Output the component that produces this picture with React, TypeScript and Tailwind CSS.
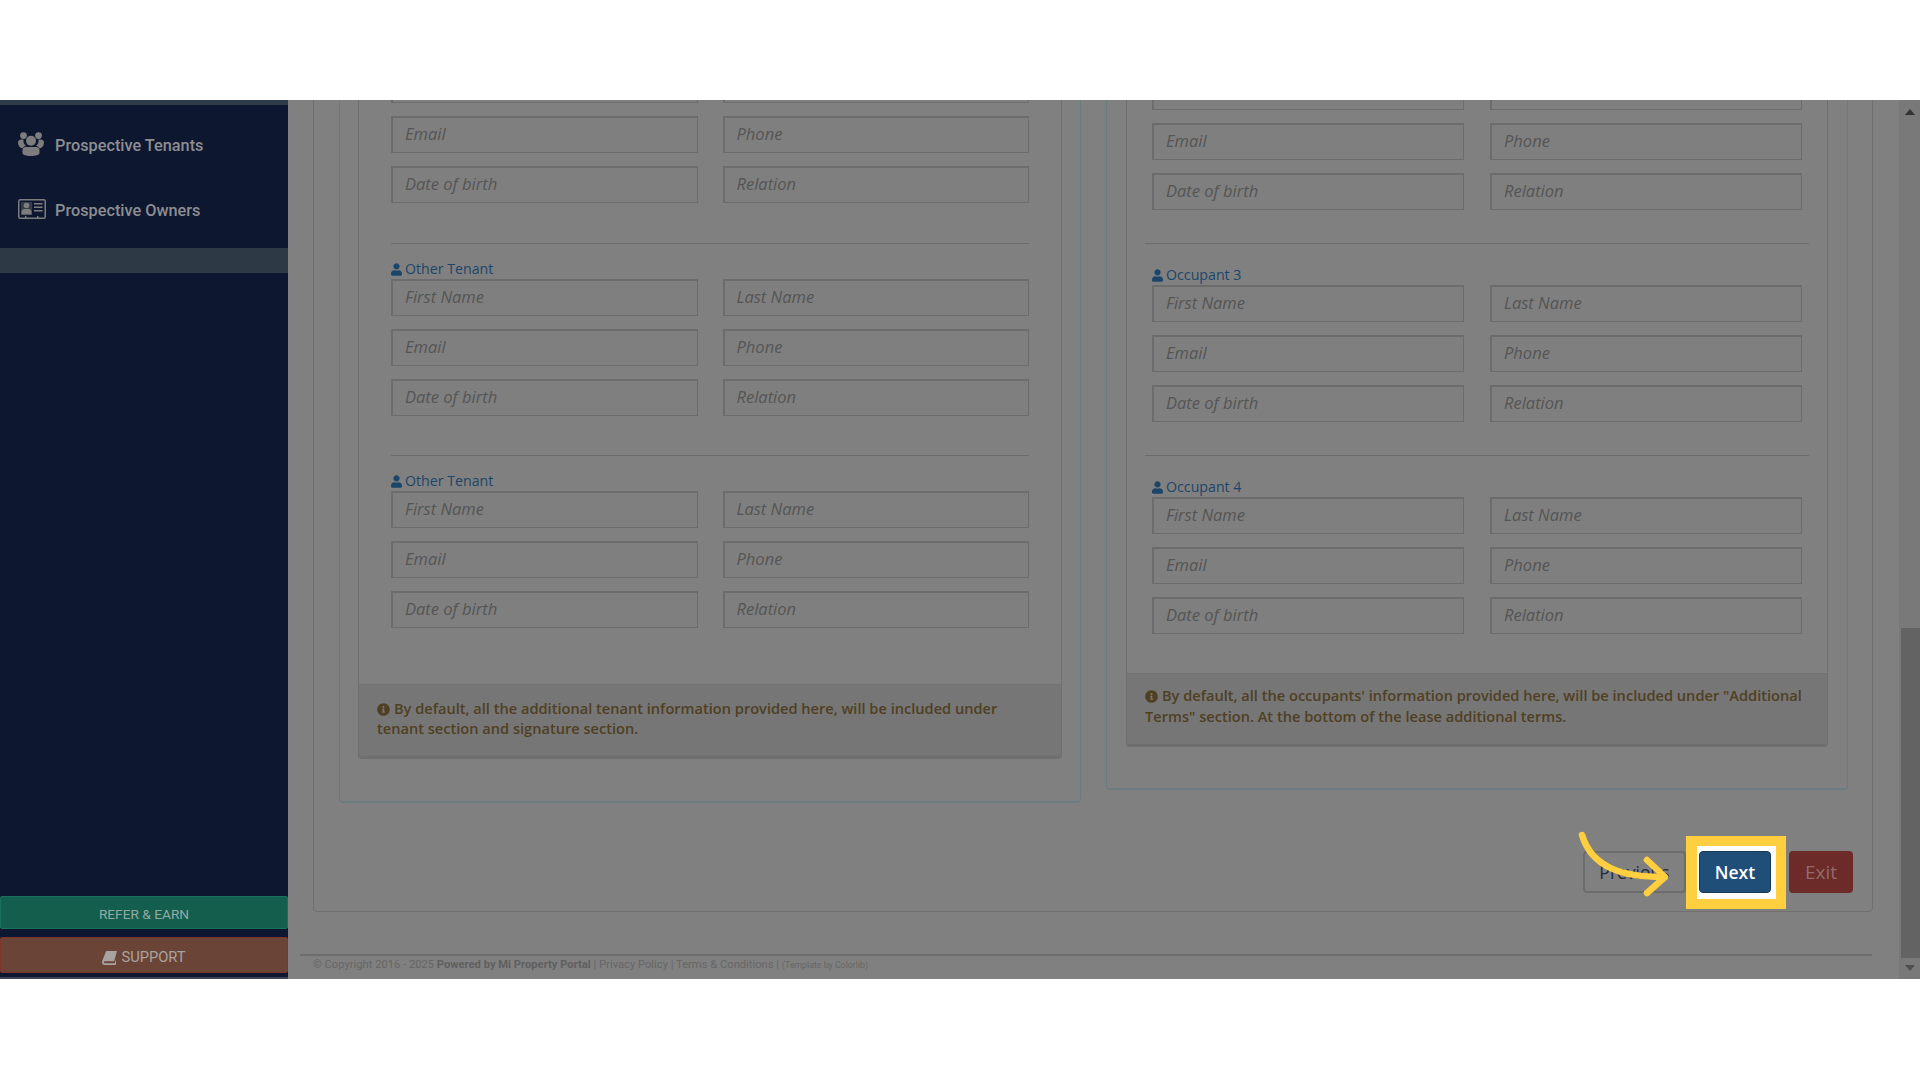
import { FaInfoCircle, FaUser } from "react-icons/fa";

function Field({ placeholder }: { placeholder: string }) {
  return (
    <input
      readOnly
      placeholder={placeholder}
      className="h-[37px] w-full border-2 border-[#6c6c6c] border-r-[1.5px] border-b-[1.5px] bg-[#7f7f7f] pr-[13px] pb-[4px] pl-[12px] font-['Open_Sans',sans-serif] text-[16.5px] italic outline-none placeholder:text-[#555555]"
    />
  );
}

function Rows({ wide = false }: { wide?: boolean }) {
  return (
    <div className={`grid grid-cols-2 gap-y-[13px] ${wide ? "gap-x-[26px]" : "gap-x-[25px]"}`}>
      <Field placeholder="First Name" />
      <Field placeholder="Last Name" />
      <Field placeholder="Email" />
      <Field placeholder="Phone" />
      <Field placeholder="Date of birth" />
      <Field placeholder="Relation" />
    </div>
  );
}

function PersonLabel({ label }: { label: string }) {
  return (
    <div className="flex h-[20px] items-center gap-[3px] font-['Open_Sans',sans-serif] text-[14.2px] text-[#1c4669]">
      <FaUser className="h-[13px] w-[11px]" />
      {label}
    </div>
  );
}

function LeftGroup({ label }: { label: string }) {
  return (
    <div>
      <div className="border-t border-[#6c6c6c] pt-[15px]">
        <PersonLabel label={label} />
      </div>
      <div className="pb-[39px]">
        <Rows />
      </div>
    </div>
  );
}

function RightGroup({ label }: { label: string }) {
  return (
    <div>
      <div className="-mx-[7px] border-t border-[#6c6c6c]" />
      <div className="pt-[21px]">
        <PersonLabel label={label} />
      </div>
      <div className="pb-[33px]">
        <Rows wide />
      </div>
    </div>
  );
}

function NoteIcon() {
  return <FaInfoCircle className="mr-[4px] mb-[2px] inline h-[13px] w-[13px]" />;
}

function UsersIcon() {
  return (
    <svg viewBox="0 0 26 24" className="-mt-[5px] h-[24px] w-[26px] shrink-0" fill="#7d7d7d">
      <circle cx="5.5" cy="3.6" r="3.4" />
      <circle cx="20.5" cy="3.6" r="3.4" />
      <circle cx="13" cy="8.8" r="5" />
      <path d="M0 10.5c0-2 1.6-3 3.4-3h2.2c-.6 2.4.2 4.6 2.4 6.2-1.8.6-3 1.6-3.6 2.8C2.2 16 0 14 0 10.5z" />
      <path d="M26 10.5c0-2-1.6-3-3.4-3h-2.2c.6 2.4-.2 4.6-2.4 6.2 1.8.6 3 1.6 3.6 2.8 2.2-.5 4.4-2.5 4.4-6z" />
      <path d="M7.5 15h11c1.8 0 3 1.4 3 3.4V21c0 2-3.8 3-8.5 3s-8.500-1-8.500-3v-2.600C4.500 16.400 5.700 15 7.500 15z" />
    </svg>
  );
}

function CardIcon() {
  return (
    <svg viewBox="0 0 28 20" className="-mt-[5px] h-[20px] w-[28px] shrink-0" fill="#7d7d7d">
      <rect x="0.75" y="0.75" width="26.500" height="18.500" rx="1.500" fill="none" stroke="#7d7d7d" strokeWidth="1.500" />
      <rect x="3" y="3" width="11" height="13" fill="#7d7d7d" opacity="0.35" />
      <circle cx="8.500" cy="6.500" r="2.800" />
      <path d="M3.500 15.500v-2.500c0-2 1.500-3 3-3h4c1.500 0 3 1 3 3v2.500z" />
      <rect x="16" y="4" width="8.500" height="1.500" />
      <rect x="16" y="7.500" width="8.500" height="1.500" />
      <rect x="16" y="11" width="8.500" height="1.500" />
      <rect x="7" y="17" width="1.500" height="2" />
      <rect x="19" y="17" width="1.500" height="2" />
    </svg>
  );
}

function BookIcon() {
  return (
    <svg viewBox="0 0 15 14" className="h-[14px] w-[15px] shrink-0" fill="#a8a3a0">
      <path d="M4.200 0H15l-2.800 10.200H3.200c-.9 0-1.300.5-1.300 1s.4 1 1.300 1h9.600l1.200-4v5.200c0 .3-.2.600-.6.600H2.600C1 14 0 12.800 0 11.200c0-.5.100-1 .3-1.500z" />
    </svg>
  );
}

function Sidebar() {
  return (
    <aside className="flex w-[288px] shrink-0 flex-col border-b-2 border-[#3b4256] bg-[#0e1730] font-['Roboto',sans-serif] text-[#8c8e92]">
      <div className="h-[5px] bg-[#2d3a47]" />
      <nav className="pt-[9px] text-[16.3px] font-medium">
        <div className="flex h-[65px] items-center gap-[11px] pl-[18px]">
          <UsersIcon />
          <span>Prospective Tenants</span>
        </div>
        <div className="flex h-[65px] items-center gap-[9px] pl-[18px]">
          <CardIcon />
          <span>Prospective Owners</span>
        </div>
      </nav>
      <div className="mt-[4px] h-[25px] bg-[#2d3945]" />
      <div className="mt-auto flex flex-col gap-[8px] pb-[4px]">
        <div className="flex h-[33px] items-center justify-center rounded-[2px] border border-[#17705c] bg-[#145e4e] pt-[3px] text-[13.7px] text-[#93aaa4]">
          REFER &amp; EARN
        </div>
        <div className="flex h-[36px] items-center justify-center gap-[4px] rounded-[2px] border border-[#7d352c] bg-[#6a4437] pt-[5px] text-[14.7px] text-[#aaa39e]">
          <BookIcon />
          SUPPORT
        </div>
      </div>
    </aside>
  );
}

function Actions() {
  return (
    <div className="mt-[48px] flex h-[42px] items-stretch justify-end pr-[19px] font-['Open_Sans',sans-serif] text-[17.5px]">
      <div className="flex w-[103px] items-center justify-center rounded-[4px] border-2 border-[#6c6c6c] text-[#1f2a3d]">
        Previous
      </div>
      <div className="relative ml-[13px]">
        <div className="absolute -top-[15px] -right-[15px] -bottom-[16px] -left-[13px] border-y-[10px] border-r-[10px] border-l-[11px] border-[#ffcf40] bg-white" />
        <div className="relative flex h-full w-[72px] items-center justify-center rounded-[4px] border border-[#16395a] bg-[#1f4e79] font-semibold text-white">
          Next
        </div>
        <svg
          viewBox="0 0 100 70"
          className="absolute -top-[21px] -left-[124px] h-[70px] w-[100px]"
          fill="none"
          stroke="#ffcf40"
          strokeWidth="6.500"
          strokeLinecap="round"
          strokeLinejoin="round"
        >
          <path d="M7 5C17 38 48 47 89 47" />
          <path d="M72 30L90 47L72 63" />
        </svg>
      </div>
      <div className="ml-[18px] flex w-[64px] items-center justify-center rounded-[4px] bg-[#6c2a28] text-[19px] text-[#8f6b6b]">
        Exit
      </div>
    </div>
  );
}

function Scrollbar() {
  return (
    <div className="flex w-[21px] shrink-0 flex-col bg-[#797979]">
      <div className="flex h-[528px] justify-center pt-[9px]">
        <svg viewBox="0 0 10 6" className="h-[6px] w-[10px]" fill="#333333">
          <path d="M5 0L10 6H0z" />
        </svg>
      </div>
      <div className="ml-[2px] h-[330px] bg-[#636363]" />
      <div className="flex justify-center pt-[7px]">
        <svg viewBox="0 0 10 6" className="h-[6px] w-[10px]" fill="#4f4f4f">
          <path d="M0 0H10L5 6z" />
        </svg>
      </div>
    </div>
  );
}

function Footer() {
  return (
    <footer className="mt-[42px] -ml-[13px] mr-[27px] border-t-2 border-[#6d6d6d] pt-[1px] pl-[13px] font-['Roboto',sans-serif] text-[11.2px] text-[#666666]">
      © Copyright 2016 - 2025 <b className="font-bold text-[#5f5f5f]">Powered by Mi Property Portal</b> | Privacy Policy | Terms &amp; Conditions |{" "}
      <span className="text-[8.8px]">(Template by Colorlib)</span>
    </footer>
  );
}

export default function App() {
  return (
    <div className="min-h-[1080px] bg-white">
      <div className="h-[100px]" />
      <div className="flex h-[879px] overflow-hidden bg-[#808080]">
        <Sidebar />
        <main className="min-w-0 flex-1 overflow-hidden">
          <div className="-mt-[60px] pl-[25px]">
            <div className="mr-[26px] rounded-[4px] border border-[#6f6f6f] pt-[11px] pb-[18px]">
              <div className="grid grid-cols-[742px_742px] items-start gap-x-[25px] pl-[25px]">
                <section className="rounded-[4px] border border-b-2 border-[#6b7c80] px-[18px] pt-[3px] pb-[42px]">
                  <div className="rounded-[3px] border border-[#6f6f6f]">
                    <div className="px-[32px] pt-[9px]">
                      <div className="pb-[40px]">
                        <Rows />
                      </div>
                      <LeftGroup label="Other Tenant" />
                      <div className="border-t border-[#6c6c6c] pt-[15px]">
                        <PersonLabel label="Other Tenant" />
                      </div>
                      <div className="pb-[56px]">
                        <Rows />
                      </div>
                    </div>
                    <div className="h-[74px] rounded-b-[3px] border-t border-b-2 border-[#6e6e6e] border-t-[#727272] bg-[#767676] pt-[13px] pr-[24px] pl-[18px] font-['Open_Sans',sans-serif] text-[14.6px] leading-[20px] font-semibold text-[#4f4022]">
                      <NoteIcon />
                      By default, all the additional tenant information provided here, will be included under tenant section and signature section.
                    </div>
                  </div>
                </section>
                <section className="rounded-[4px] border border-b-2 border-[#6b7c80] px-[19px] pt-[3px] pb-[41px]">
                  <div className="rounded-[3px] border border-[#6f6f6f]">
                    <div className="px-[25px] pt-[16px] pb-[6px]">
                      <div className="pb-[33px]">
                        <Rows wide />
                      </div>
                      <RightGroup label="Occupant 3" />
                      <RightGroup label="Occupant 4" />
                    </div>
                    <div className="h-[73px] rounded-b-[3px] border-t border-b-2 border-[#6e6e6e] border-t-[#727272] bg-[#767676] px-[18px] pt-[11px] font-['Open_Sans',sans-serif] text-[14.6px] leading-[21px] font-semibold text-[#4f4022]">
                      <NoteIcon />
                      By default, all the occupants' information provided here, will be included under "Additional Terms" section. At the bottom of the lease additional terms.
                    </div>
                  </div>
                </section>
              </div>
              <Actions />
            </div>
            <Footer />
          </div>
        </main>
        <Scrollbar />
      </div>
    </div>
  );
}
